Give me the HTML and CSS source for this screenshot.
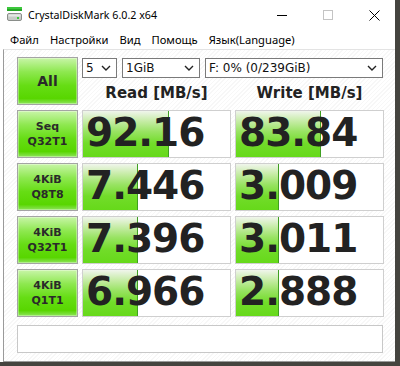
FILE: index.html
```html
<!DOCTYPE html>
<html lang="ru">
<head>
    <meta charset="UTF-8">
    <title>CrystalDiskMark 6.0.2 x64</title>
    <link rel="stylesheet" href="styles.css">
</head>
<body>
    <div class="window">
        <div class="titlebar">
            <svg class="app-icon" width="16" height="15" viewBox="0 0 16 15">
                <rect x="0" y="0" width="15" height="2" fill="#3cc83c"/>
                <rect x="0" y="2" width="15" height="2" fill="#26a626"/>
                <rect x="0.5" y="6.5" width="14" height="7" rx="1.5" fill="#c8ccc8" stroke="#8a8e8a"/>
                <rect x="1.5" y="7.5" width="12" height="2" fill="#e6e8e6"/>
                <rect x="10" y="10" width="2" height="2" fill="#3cc83c"/>
            </svg>
            <span class="title">CrystalDiskMark 6.0.2 x64</span>
            <div class="controls">
                <span class="ctl"><svg width="10" height="10" viewBox="0 0 10 10"><path d="M0 5.5h10" stroke="#000" stroke-width="1"/></svg></span>
                <span class="ctl"><svg width="10" height="10" viewBox="0 0 10 10"><rect x="0.5" y="0.5" width="9" height="9" fill="none" stroke="#c4c4c4"/></svg></span>
                <span class="ctl"><svg width="11" height="11" viewBox="0 0 11 11"><path d="M0.5 0.5l10 10M10.5 0.5l-10 10" stroke="#000" stroke-width="1"/></svg></span>
            </div>
        </div>
        <div class="menubar">
            <span class="menu-item">Файл</span>
            <span class="menu-item">Настройки</span>
            <span class="menu-item">Вид</span>
            <span class="menu-item">Помощь</span>
            <span class="menu-item">Язык(Language)</span>
        </div>
        <div class="client">
            <div class="bench-grid">
                <div class="test-btn all-btn">All</div>
                <div class="top-panel">
                    <div class="selects">
                        <div class="dropdown dd-count">5<svg class="chev" width="10" height="6" viewBox="0 0 10 6"><path d="M1 1l4 4 4-4" fill="none" stroke="#222" stroke-width="1.4"/></svg></div>
                        <div class="dropdown dd-size">1GiB<svg class="chev" width="10" height="6" viewBox="0 0 10 6"><path d="M1 1l4 4 4-4" fill="none" stroke="#222" stroke-width="1.4"/></svg></div>
                        <div class="dropdown dd-drive">F: 0% (0/239GiB)<svg class="chev" width="10" height="6" viewBox="0 0 10 6"><path d="M1 1l4 4 4-4" fill="none" stroke="#222" stroke-width="1.4"/></svg></div>
                    </div>
                    <div class="headers">
                        <div class="col-head">Read [MB/s]</div>
                        <div class="col-head">Write [MB/s]</div>
                    </div>
                </div>

                <div class="test-btn">Seq<br>Q32T1</div>
                <div class="result"><div class="fill" style="width: 86px"></div><span class="value">92.16</span></div>
                <div class="result"><div class="fill" style="width: 85px"></div><span class="value">83.84</span></div>

                <div class="test-btn">4KiB<br>Q8T8</div>
                <div class="result"><div class="fill" style="width: 55px"></div><span class="value">7.446</span></div>
                <div class="result"><div class="fill" style="width: 43px"></div><span class="value">3.009</span></div>

                <div class="test-btn">4KiB<br>Q32T1</div>
                <div class="result"><div class="fill" style="width: 55px"></div><span class="value">7.396</span></div>
                <div class="result"><div class="fill" style="width: 43px"></div><span class="value">3.011</span></div>

                <div class="test-btn">4KiB<br>Q1T1</div>
                <div class="result"><div class="fill" style="width: 55px"></div><span class="value">6.966</span></div>
                <div class="result"><div class="fill" style="width: 43px"></div><span class="value">2.888</span></div>
            </div>
            <div class="comment"></div>
        </div>
    </div>
</body>
</html>
```

FILE: styles.css
```css
:root {
    --text: #000; --value: #222; --btn-text: #2a2a2a;
    --cell-border: #cfcfcf; --frame: #9a9a9a; --desktop: #45443f;
}
html, body { margin: 0; padding: 0; }
body {
    width: 400px; height: 366px; overflow: hidden;
    background: var(--desktop);
    font-family: 'Noto Sans', 'Open Sans', sans-serif; color: var(--text);
}
.window { width: 395px; height: 362px; background: #fff; display: flex; flex-direction: column; }

.titlebar { height: 30px; display: flex; align-items: center; padding-left: 7px; box-sizing: border-box; }
.app-icon { margin-top: -1px; }
.title { font-size: 10.7px; margin-left: 5px; }
.controls { margin-left: auto; display: flex; height: 30px; margin-right: -2px; }
.ctl { width: 46px; display: flex; align-items: center; justify-content: center; }

.menubar { height: 19px; display: flex; align-items: center; padding-left: 4.5px; font-size: 11.2px; }
.menu-item { padding: 0 5.5px; }

.client {
    flex: 1; margin-left: 3px;
    border: 1px solid var(--frame); border-right: none; border-top-color: #e3e3e3;
    background: repeating-linear-gradient(135deg, #fff 0 2px, #f7f7f7 2px 3px);
    padding: 7px 0 0 13px;
}

.bench-grid {
    display: grid; grid-template-columns: 61px 149px 149px;
    grid-auto-rows: 48px; column-gap: 4px; row-gap: 5px;
}

.test-btn {
    box-sizing: border-box; border: 1px solid #a4a4a4;
    background: linear-gradient(to bottom, #c8f5a8 0%, #8ee850 30%, #66dd14 60%, #58d600 88%, #8ee45c 100%);
    box-shadow: inset 0 0 0 1px rgba(255,255,255,0.35);
    display: flex; align-items: center; justify-content: center; text-align: center;
    font-family: 'DejaVu Sans', sans-serif; font-weight: bold; font-size: 11px; line-height: 15px;
    color: var(--btn-text);
}
.all-btn { font-size: 14px; }

.top-panel { grid-column: 2 / 4; display: flex; flex-direction: column; }
.selects { display: flex; gap: 5px; margin-top: 1px; height: 20px; }
.dropdown {
    box-sizing: border-box; height: 20px; border: 1px solid #7a7a7a; background: #fff;
    display: flex; align-items: center; padding: 0 5px 0 3px;
    font-family: 'DejaVu Sans', sans-serif; font-size: 12px; color: #111;
}
.dd-count { width: 35px; }
.dd-size { width: 78px; }
.dd-drive { width: 178px; }
.chev { margin-left: auto; }

.headers { flex: 1; display: grid; grid-template-columns: 149px 149px; column-gap: 4px; align-items: center; padding-top: 2px; }
.col-head { text-align: center; font-family: 'DejaVu Sans', sans-serif; font-weight: bold; font-size: 15px; color: #222; }

.result {
    position: relative; box-sizing: border-box; border: 1px solid var(--cell-border); background: #fff;
    display: flex; align-items: center; overflow: hidden;
}
.fill {
    position: absolute; left: 0; top: 0; bottom: 0; box-sizing: border-box;
    border-right: 1px solid #3f9f22;
    background: linear-gradient(to bottom, #f0f5ec 0%, #c6eca6 22%, #98e362 45%, #72dc2a 70%, #66d91a 100%);
}
.value {
    position: relative; padding-left: 3px; margin-top: -3px;
    font-family: 'DejaVu Sans', sans-serif; font-weight: bold; font-size: 39px; letter-spacing: -1px;
    color: var(--value);
}

.comment {
    width: 366px; height: 28px; box-sizing: border-box; margin-top: 8px;
    border: 1px solid #c8c8c8; background: #fff;
}
```
